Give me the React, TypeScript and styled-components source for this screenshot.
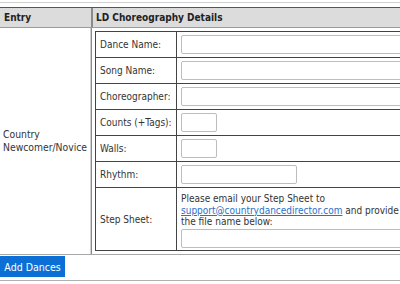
import React from "react";
import styled, { createGlobalStyle } from "styled-components";

const Global = createGlobalStyle`
  html, body { margin: 0; padding: 0; background: #fff; overflow: hidden; }
  body { font-family: "DejaVu Sans Condensed", "Liberation Sans", sans-serif; font-size: 10px; color: #333; }
`;

const Page = styled.div`
  width: 560px;
  padding-top: 2px;
`;

const Frame = styled.div`
  border-top: 1px solid #cfcfcf;
  padding-top: 4px;
`;

const HeaderRow = styled.div`
  display: grid;
  grid-template-columns: 91px 1fr;
  background: #dcdcdc;
  border-top: 1px solid #555;
  border-bottom: 1px solid #9a9a9a;
  height: 19px;
`;

const HeaderCell = styled.div<{ $divider?: boolean }>`
  font-weight: bold;
  line-height: 19px;
  padding-left: ${(p) => (p.$divider ? "3px" : "4px")};
  border-left: ${(p) => (p.$divider ? "2px solid #8a8a8a" : "none")};
  color: #222;
`;

const BodyRow = styled.div`
  display: grid;
  grid-template-columns: 91px 1fr;
  border-bottom: 1px solid #a8a8a8;
`;

const EntryCell = styled.div`
  display: flex;
  align-items: center;
  padding: 0 3px;
  line-height: 13px;
  font-size: 10.3px;
  border-right: 1px solid #d0d0d0;
`;

const DetailsCell = styled.div`
  border-left: 1px solid #8a8a8a;
  padding: 3px 0 3px 3px;
`;

const InnerTable = styled.div`
  display: grid;
  grid-template-columns: 81px 1fr;
  border-top: 1px solid #444;
  border-left: 1px solid #444;
  border-bottom: 1px solid #444;
`;

const Label = styled.div<{ $tall?: boolean }>`
  display: flex;
  align-items: center;
  padding-left: 4px;
  height: ${(p) => (p.$tall ? "62px" : "25px")};
  border-right: 1px solid #444;
  border-bottom: 1px solid #444;
  &:nth-last-child(2) { border-bottom: none; }
  color: #333;
`;

const Value = styled.div`
  display: flex;
  flex-direction: column;
  justify-content: center;
  padding-left: 4px;
  border-bottom: 1px solid #444;
  &:last-child { border-bottom: none; }
`;

const Input = styled.div<{ $w?: number }>`
  box-sizing: border-box;
  height: 19px;
  width: ${(p) => (p.$w ? `${p.$w}px` : "100%")};
  border: 1px solid #bdbdbd;
  border-radius: 2px;
  background: #fff;
`;

const Note = styled.div`
  line-height: 11.5px;
  color: #333;
  margin-top: 3px;
  margin-bottom: 1px;
`;

const Link = styled.a`
  color: #2a6fc9;
  text-decoration: underline;
`;

const Footer = styled.div`
  padding-top: 1px;
  padding-bottom: 3px;
  border-bottom: 1px solid #b0b0b0;
`;

const Button = styled.button`
  font-family: inherit;
  font-size: 10.5px;
  background: #0b6fd6;
  color: #fff;
  border: none;
  height: 21px;
  width: 65px;
  padding: 0;
  display: block;
`;

const fields: { label: string; w?: number }[] = [
  { label: "Dance Name:" },
  { label: "Song Name:" },
  { label: "Choreographer:" },
  { label: "Counts (+Tags):", w: 36 },
  { label: "Walls:", w: 36 },
  { label: "Rhythm:", w: 116 },
];

export default function App() {
  return (
    <Page>
      <Global />
      <Frame>
        <HeaderRow>
          <HeaderCell>Entry</HeaderCell>
          <HeaderCell $divider>LD Choreography Details</HeaderCell>
        </HeaderRow>
        <BodyRow>
          <EntryCell>Country Newcomer/Novice</EntryCell>
          <DetailsCell>
            <InnerTable>
              {fields.map((f) => (
                <React.Fragment key={f.label}>
                  <Label>{f.label}</Label>
                  <Value>
                    <Input $w={f.w} />
                  </Value>
                </React.Fragment>
              ))}
              <Label $tall>Step Sheet:</Label>
              <Value>
                <Note>
                  Please email your Step Sheet to
                  <br />
                  <Link href="#">support@countrydancedirector.com</Link> and provide
                  <br />
                  the file name below:
                </Note>
                <Input />
              </Value>
            </InnerTable>
          </DetailsCell>
        </BodyRow>
        <Footer>
          <Button>Add Dances</Button>
        </Footer>
      </Frame>
    </Page>
  );
}
